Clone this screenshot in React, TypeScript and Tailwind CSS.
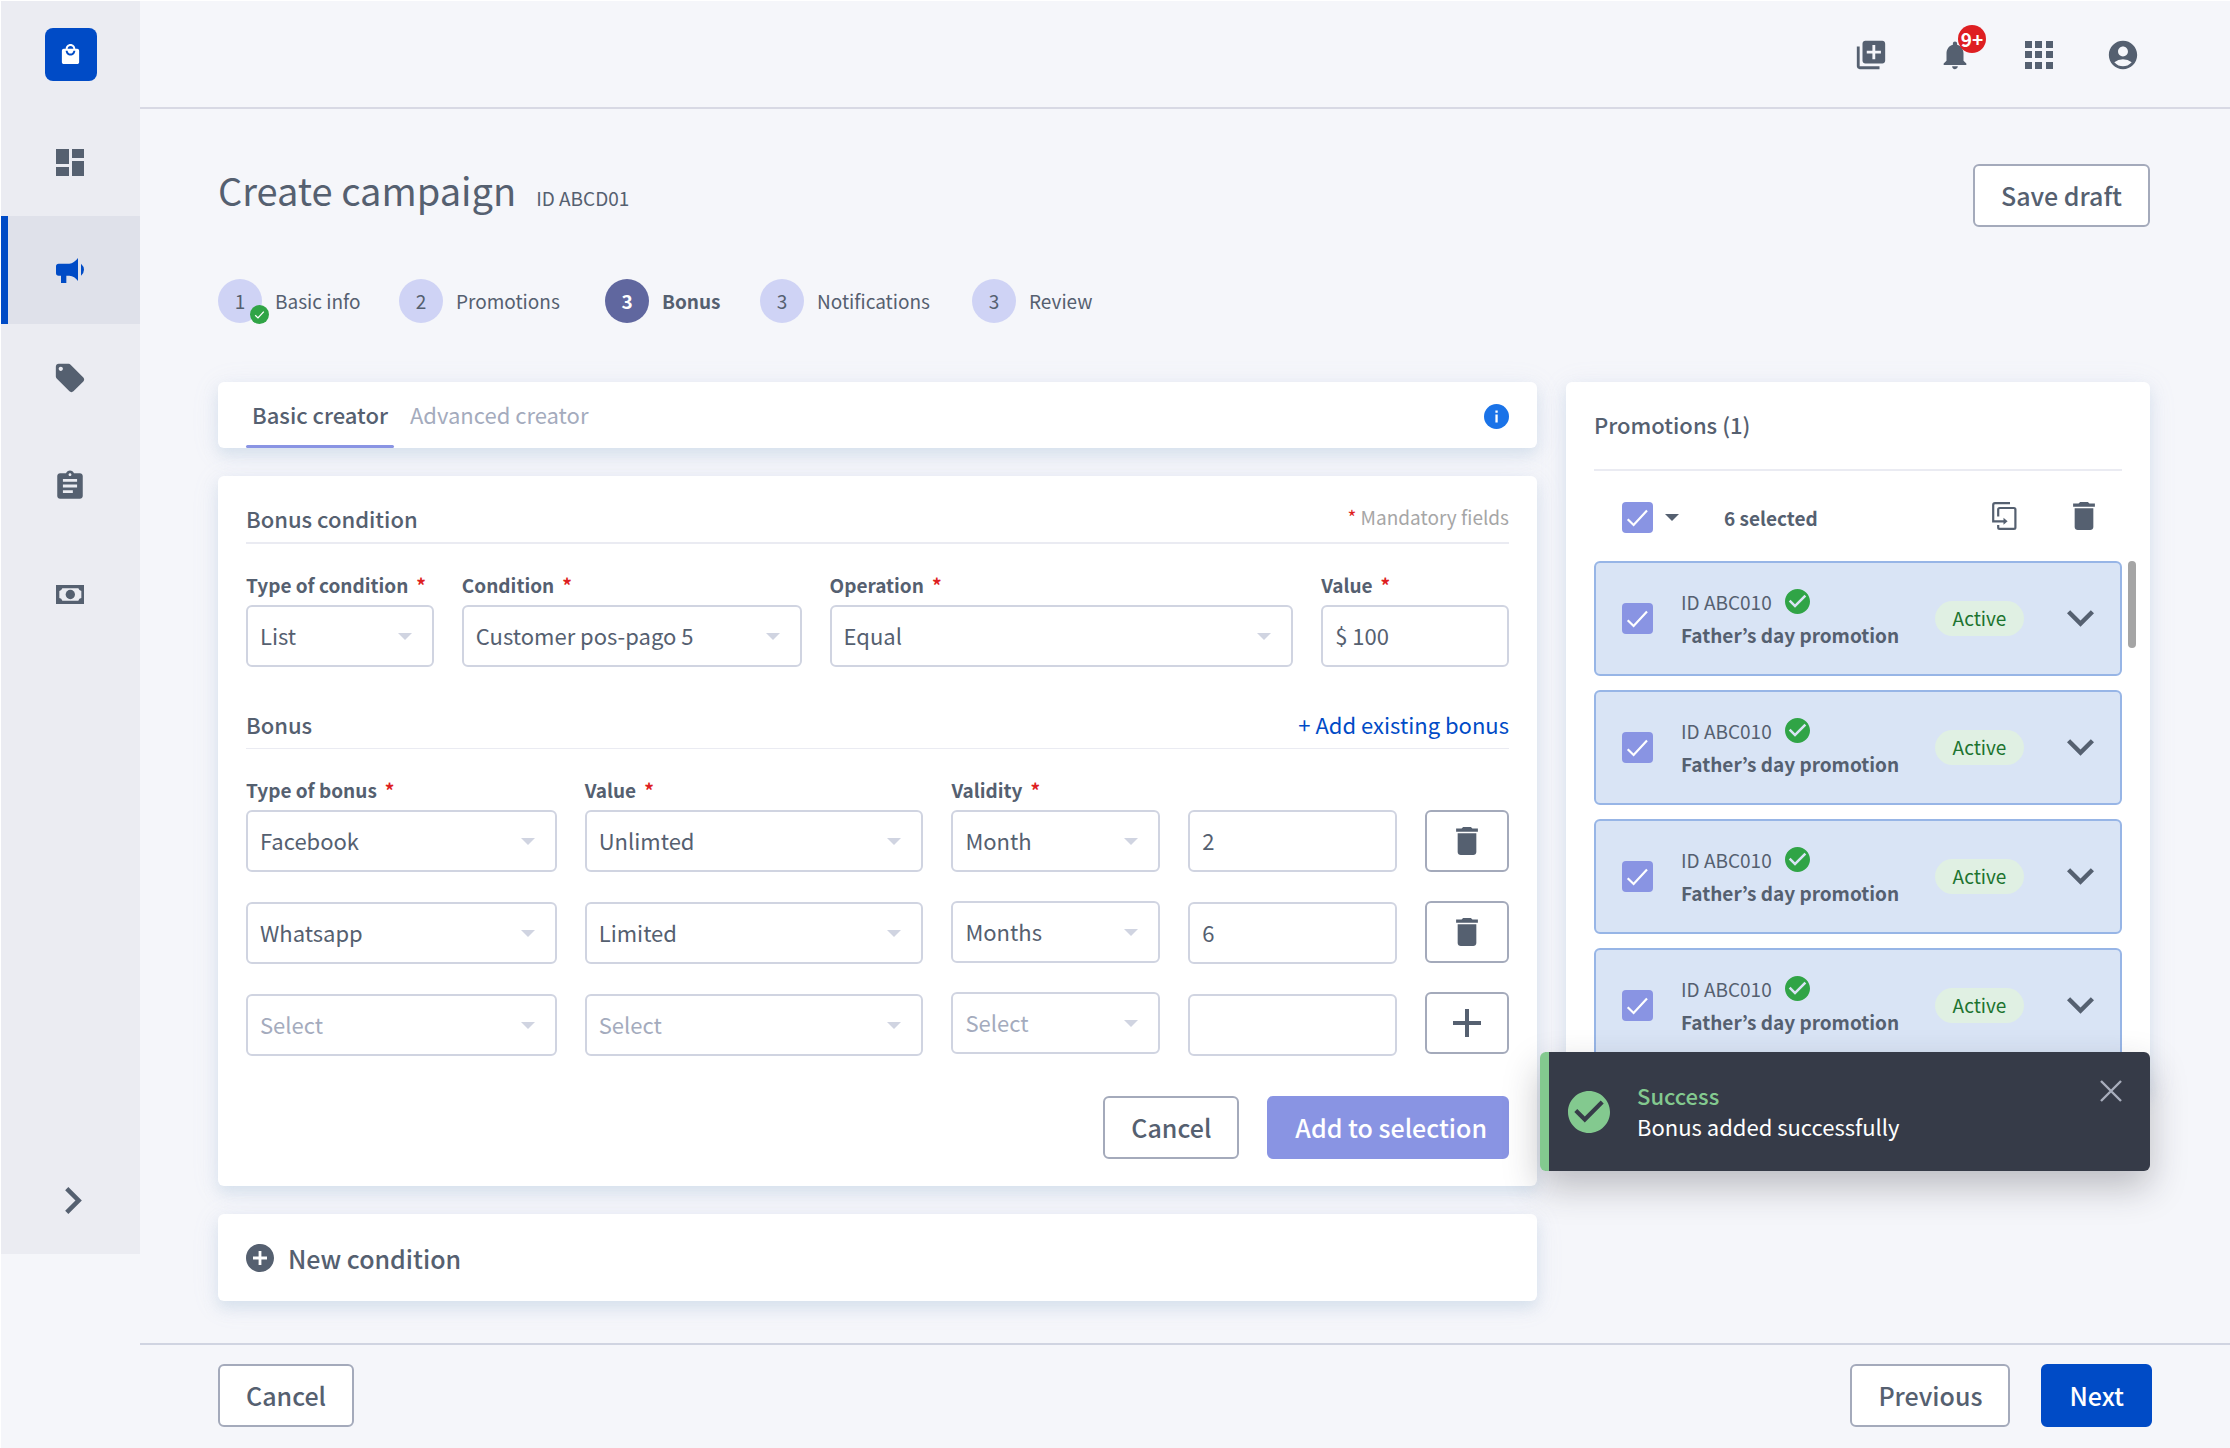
import type { ReactNode } from "react";
import { MdAccountCircle, MdAssignment, MdLibraryAdd, MdLocalMall, MdLocalOffer, MdNotifications } from "react-icons/md";

function Trash() {
  return (
    <svg viewBox="5 3 14 18" className="h-7 w-[22px]" fill="currentColor" aria-hidden="true">
      <path d="M6 19c0 1.1.9 2 2 2h8c1.1 0 2-.9 2-2V7H6v12zM19 4h-3.5l-1-1h-5l-1 1H5v2h14V4z" />
    </svg>
  );
}

function CheckCircle({ className }: { className: string }) {
  return (
    <svg viewBox="2 2 20 20" className={className} fill="currentColor" aria-hidden="true">
      <path d="M12 2C6.48 2 2 6.48 2 12s4.48 10 10 10 10-4.48 10-10S17.52 2 12 2zm-2 15l-5-5 1.41-1.41L10 14.17l7.59-7.59L19 8l-9 9z" />
    </svg>
  );
}

function Dashboard() {
  return (
    <svg viewBox="0 0 28 27" className="h-[27px] w-7" fill="currentColor" aria-hidden="true">
      <path d="M0 0h13v15H0zM16 0h12v9H16zM0 18h13v9H0zM16 12h12v15H16z" />
    </svg>
  );
}

function Megaphone() {
  return (
    <svg viewBox="168 414 84 75" className="h-[25px] w-7" fill="currentColor" aria-hidden="true">
      <path d="M176 431H208Q222 430 234 414V483Q224 468 208 467H199V489H183V467H176Q168 467 168 459V439Q168 431 176 431Z" />
      <path d="M243 431Q252 439 252 449T243 467Z" />
    </svg>
  );
}

function Money() {
  return (
    <svg viewBox="0 0 84 57" className="h-[19px] w-7" fill="currentColor" fillRule="evenodd" aria-hidden="true">
      <path d="M0 0H84V57H0ZM19 10Q17 17 10 18V39Q17 40 19 47H67Q69 40 76 39V18Q69 17 67 10Z" />
      <circle cx="43" cy="28.5" r="14" />
    </svg>
  );
}

function AppsGrid() {
  return (
    <svg viewBox="0 0 28 28" className="m-[3px] size-7" fill="currentColor" aria-hidden="true">
      <path d="M0 0h7v7H0zM10 0h7v7h-7zM21 0h7v7h-7zM0 10h7v7H0zM10 10h7v7h-7zM21 10h7v7h-7zM0 21h7v7H0zM10 21h7v7h-7zM21 21h7v7h-7z" />
    </svg>
  );
}

function MoveCopy() {
  return (
    <svg viewBox="0 0 25 28" className="h-7 w-[25px]" fill="none" stroke="currentColor" strokeWidth="2.2" aria-hidden="true">
      <path d="M18 1.2H3Q1.2 1.2 1.2 3V19.3H12.5" />
      <path d="M6.2 14.5V7.5Q6.2 6 7.7 6H21.9Q23.4 6 23.4 7.5V25.4Q23.4 26.8 21.9 26.8H7.7Q6.2 26.8 6.2 25.4V23" />
      <path d="M11.5 15.8L15.6 19.3L11.5 22.8Z" fill="currentColor" stroke="none" />
    </svg>
  );
}

function Caret({ className }: { className: string }) {
  return (
    <svg viewBox="0 0 14 7" className={className} fill="currentColor" aria-hidden="true">
      <path d="M0 0H14L7 7Z" />
    </svg>
  );
}

function CheckBox({ label }: { label: string }) {
  return (
    <span className="grid size-[31px] shrink-0">
      <input type="checkbox" defaultChecked aria-label={label} className="col-start-1 row-start-1 size-[31px] appearance-none rounded bg-[#8994e3]" />
      <svg viewBox="0 0 31 31" className="pointer-events-none col-start-1 row-start-1 size-[31px]" fill="none" stroke="white" strokeWidth="2.2" aria-hidden="true">
        <path d="M5.7 17.2L11.6 23L25 8.6" />
      </svg>
    </span>
  );
}

const fieldBox = "h-[62px] w-full rounded-md border-2 border-[#d0d4e1] bg-white pb-0.5 pl-3 text-[22px] leading-8";

function Select({ label, id, value, muted }: { label: string; id?: string; value: string; muted?: boolean }) {
  return (
    <div className="relative">
      <select id={id} aria-label={id ? undefined : label} className={`${fieldBox} appearance-none pr-10 ${muted ? "text-[#a4abbd]" : ""}`}>
        <option>{value}</option>
      </select>
      <Caret className="pointer-events-none absolute top-[28px] right-[22px] h-[7px] w-3.5 text-[#d0d4e1]" />
    </div>
  );
}

function TextField({ label, id, value }: { label: string; id?: string; value: string }) {
  return <input id={id} aria-label={id ? undefined : label} defaultValue={value} className={fieldBox} />;
}

function Label({ htmlFor, children }: { htmlFor: string; children: ReactNode }) {
  return (
    <label htmlFor={htmlFor} className="mb-1.5 flex h-7 gap-2 text-[19px] leading-7 font-bold">
      {children}
      <span className="text-[#de1f22]">*</span>
    </label>
  );
}

function Button({ children, look = "outline" }: { children: ReactNode; look?: "outline" | "soft" | "primary" }) {
  const looks = {
    outline: "border-[#a4aabb] bg-white px-[26px]",
    soft: "border-[#8994e3] bg-[#8994e3] pr-5 pl-[26px] text-white",
    primary: "border-[#004bc6] bg-[#004bc6] px-[26px] text-white",
  };
  return (
    <button type="button" className={`h-[63px] rounded-md border-2 pb-0.5 text-[25px] leading-9 font-medium ${looks[look]}`}>
      {children}
    </button>
  );
}

function IconButton({ label, children }: { label: string; children: ReactNode }) {
  return (
    <button type="button" aria-label={label} className="flex h-[62px] w-full items-center justify-center rounded-md border-2 border-[#a4aabb] bg-white">
      {children}
    </button>
  );
}

const card = "rounded-md bg-white shadow-[0_7px_14px_rgba(175,200,220,0.36),0_4px_28px_rgba(160,165,215,0.12)]";

const nav = [
  { label: "Dashboard", icon: <Dashboard /> },
  { label: "Campaigns", icon: <Megaphone />, active: true },
  { label: "Offers", icon: <MdLocalOffer size={34} /> },
  { label: "Reports", icon: <MdAssignment size={34} /> },
  { label: "Payments", icon: <Money /> },
];

function Sidebar() {
  return (
    <nav aria-label="Main" className="flex h-[1253px] w-[139px] shrink-0 flex-col bg-[#ebecf2]">
      <div className="flex h-[107px] items-center justify-center">
        <a href="#home" aria-label="Home" className="flex h-[53px] w-[52px] items-center justify-center rounded-lg bg-[#004bc6] text-white">
          <MdLocalMall size={23} />
        </a>
      </div>
      {nav.map((n) => (
        <a
          key={n.label}
          href={`#${n.label.toLowerCase()}`}
          aria-label={n.label}
          className={`flex h-[108px] items-center justify-center border-r-8 border-l-[7px] border-r-transparent ${n.active ? "border-l-[#004bc6] bg-[#dfe1ea] text-[#004bc6]" : "border-l-transparent"}`}
        >
          {n.icon}
        </a>
      ))}
      <button type="button" aria-label="Expand menu" className="mt-auto mb-9 flex h-9 items-center justify-center pl-1.5">
        <svg viewBox="8.59 6 7.41 12" className="h-[27px] w-[17px]" fill="currentColor" aria-hidden="true">
          <path d="M10 6L8.59 7.41 13.17 12l-4.58 4.59L10 18l6-6z" />
        </svg>
      </button>
    </nav>
  );
}

function Header() {
  return (
    <header className="flex h-[108px] items-center justify-end gap-[50px] border-b-2 border-[#d8d9e4] pt-0.5 pr-[90px]">
      <button type="button" aria-label="Add to library"><MdLibraryAdd size={34} /></button>
      <button type="button" aria-label="Notifications" className="relative">
        <MdNotifications size={34} />
        <span className="absolute -top-[13px] -right-[14px] flex size-7 items-center justify-center rounded-full bg-[#de1f22] text-[19px] leading-7 font-bold text-white">9+</span>
      </button>
      <button type="button" aria-label="Apps"><AppsGrid /></button>
      <button type="button" aria-label="Account"><MdAccountCircle size={34} /></button>
    </header>
  );
}

const steps = [
  { n: 1, label: "Basic info", done: true },
  { n: 2, label: "Promotions" },
  { n: 3, label: "Bonus", current: true },
  { n: 3, label: "Notifications" },
  { n: 3, label: "Review" },
];

function Steps() {
  return (
    <ol className="mt-[52px] grid grid-cols-[181px_206px_155px_212px_auto] text-[19px] leading-7">
      {steps.map((s) => (
        <li key={s.label} className={`flex items-center gap-[13px] ${s.current ? "font-bold" : ""}`}>
          <span className={`relative flex size-11 items-center justify-center rounded-full ${s.current ? "bg-[#60679f] text-white" : "bg-[#cfd3f5]"}`}>
            {s.n}
            {s.done && (
              <svg viewBox="0 0 19 19" className="absolute -right-[7px] -bottom-px size-[19px]" aria-hidden="true">
                <circle cx="9.5" cy="9.5" r="9.5" fill="#30a446" />
                <path d="M5.2 10.2L8 12.9L13.8 6.6" fill="none" stroke="white" strokeWidth="1.3" />
              </svg>
            )}
          </span>
          {s.label}
        </li>
      ))}
    </ol>
  );
}

function Tabs() {
  return (
    <div className={`flex h-[66px] justify-between px-7 ${card}`}>
      <div role="tablist" className="flex gap-2.5 text-[22px] leading-8">
        <button type="button" role="tab" aria-selected="true" className="relative px-1.5 pb-0.5 font-medium">
          Basic creator
          <span className="absolute inset-x-0 bottom-0 h-[3px] rounded-sm bg-[#8994e3]" />
        </button>
        <button type="button" role="tab" aria-selected="false" className="px-1.5 pb-0.5 text-[#a4abbd]">Advanced creator</button>
      </div>
      <button type="button" aria-label="Information" className="pt-0.5">
        <svg viewBox="0 0 25 25" className="size-[25px]" aria-hidden="true">
          <circle cx="12.5" cy="12.5" r="12.5" fill="#1a73e8" />
          <path d="M11.4 10.5h2.3v8h-2.3zM11.4 6.5h2.3v2.2h-2.3z" fill="white" />
        </svg>
      </button>
    </div>
  );
}

function BonusForm() {
  return (
    <form className={`mt-7 px-7 pt-7 pb-[27px] ${card}`}>
      <div className="flex items-start justify-between border-b-2 border-[#eaebf2] pb-2.5">
        <h2 className="text-[22px] leading-7 font-medium">Bonus condition</h2>
        <p className="text-[19px] leading-[26px] text-[#a6a6a6]"><span className="text-[#de1f22]">*</span> Mandatory fields</p>
      </div>
      <div className="mt-[27px] grid grid-cols-[188fr_340fr_464fr_188fr] gap-7">
        <div>
          <Label htmlFor="condition-type">Type of condition</Label>
          <Select id="condition-type" label="Type of condition" value="List" />
        </div>
        <div>
          <Label htmlFor="condition">Condition</Label>
          <Select id="condition" label="Condition" value="Customer pos-pago 5" />
        </div>
        <div>
          <Label htmlFor="operation">Operation</Label>
          <Select id="operation" label="Operation" value="Equal" />
        </div>
        <div>
          <Label htmlFor="condition-value">Value</Label>
          <TextField id="condition-value" label="Value" value="$ 100" />
        </div>
      </div>

      <div className="mt-[43px] flex items-start justify-between border-b border-[#eaebf2] pb-2.5">
        <h2 className="text-[22px] leading-7 font-medium">Bonus</h2>
        <a href="#existing" className="text-[22px] leading-7 text-[#004bc6]">+ Add existing bonus</a>
      </div>
      <div className="mt-[27px] grid grid-cols-[311fr_339fr_209fr_209fr_84fr] gap-x-7">
        <div>
          <Label htmlFor="bonus-type">Type of bonus</Label>
          <div className="flex flex-col gap-[30px]">
            <Select id="bonus-type" label="Type of bonus" value="Facebook" />
            <Select label="Type of bonus, row 2" value="Whatsapp" />
            <Select label="Type of bonus, row 3" value="Select" muted />
          </div>
        </div>
        <div>
          <Label htmlFor="bonus-value">Value</Label>
          <div className="flex flex-col gap-[30px]">
            <Select id="bonus-value" label="Value" value="Unlimted" />
            <Select label="Value, row 2" value="Limited" />
            <Select label="Value, row 3" value="Select" muted />
          </div>
        </div>
        <div>
          <Label htmlFor="validity">Validity</Label>
          <div className="flex flex-col gap-[29px]">
            <Select id="validity" label="Validity" value="Month" />
            <Select label="Validity, row 2" value="Months" />
            <Select label="Validity, row 3" value="Select" muted />
          </div>
        </div>
        <div className="flex flex-col gap-[30px] pt-[34px]">
          <TextField label="Amount, row 1" value="2" />
          <TextField label="Amount, row 2" value="6" />
          <TextField label="Amount, row 3" value="" />
        </div>
        <div className="flex flex-col gap-[29px] pt-[34px]">
          <IconButton label="Delete row 1"><Trash /></IconButton>
          <IconButton label="Delete row 2"><Trash /></IconButton>
          <IconButton label="Add row">
            <svg viewBox="0 0 28 28" className="size-7" fill="currentColor" aria-hidden="true">
              <path d="M12 0h4v12h12v4H16v12h-4V16H0v-4h12z" />
            </svg>
          </IconButton>
        </div>
      </div>
      <div className="mt-10 flex justify-end gap-7">
        <Button>Cancel</Button>
        <Button look="soft">Add to selection</Button>
      </div>
    </form>
  );
}

function PromotionItem({ id }: { id: string }) {
  return (
    <li className="flex h-[115px] items-center rounded-md border-2 border-[#97b5e6] bg-[#d9e4f5] px-[26px]">
      <CheckBox label={`Select ${id}`} />
      <div className="ml-7 pb-0.5 text-[19px] leading-[33px]">
        <p className="flex items-center gap-[13px]">
          ID ABC010
          <CheckCircle className="size-[25px] text-[#30a446]" />
        </p>
        <p className="font-bold">Father’s day promotion</p>
      </div>
      <span className="mr-[43px] ml-auto flex h-[35px] w-[89px] items-center justify-center rounded-full bg-[#e0f0e3] pb-0.5 text-[19px] leading-7 text-[#1d7430]">Active</span>
      <button type="button" aria-label="Expand promotion">
        <svg viewBox="6 8.59 12 7.41" className="h-[17px] w-[27px]" fill="currentColor" aria-hidden="true">
          <path d="M16.59 8.59L12 13.17 7.41 8.59 6 10l6 6 6-6z" />
        </svg>
      </button>
    </li>
  );
}

function Promotions() {
  return (
    <section className={`px-7 pt-[26px] pb-7 ${card}`}>
      <h2 className="border-b-2 border-[#eaebf2] pb-[29px] text-[22px] leading-8 font-medium">Promotions (1)</h2>
      <div className="mt-[31px] flex h-[31px] items-center pr-[27px] pl-7">
        <CheckBox label="Select all" />
        <button type="button" aria-label="Selection options" className="ml-3"><Caret className="h-[7px] w-3.5" /></button>
        <span className="ml-[45px] text-[19px] leading-7 font-bold">6 selected</span>
        <button type="button" aria-label="Move" className="mr-14 ml-auto pb-[3px]"><MoveCopy /></button>
        <button type="button" aria-label="Delete" className="pb-[3px]"><Trash /></button>
      </div>
      <div className="relative mt-7">
        <ul className="flex flex-col gap-3.5">
          <PromotionItem id="promotion 1" />
          <PromotionItem id="promotion 2" />
          <PromotionItem id="promotion 3" />
          <PromotionItem id="promotion 4" />
        </ul>
        <span className="absolute top-0 -right-3.5 h-[87px] w-2 rounded-full bg-[#a5a5a5]" />
      </div>
    </section>
  );
}

function Toast() {
  return (
    <div role="status" className="absolute top-[670px] right-0 -left-[26px] flex h-[119px] items-center rounded-md border-l-[9px] border-[#83c98f] bg-[#363b48] pl-[19px] shadow-[0_16px_36px_rgba(40,40,50,0.28)]">
      <CheckCircle className="size-[42px] text-[#83c98f]" />
      <div className="ml-[27px] pb-0.5 text-[22px] leading-[31px]">
        <p className="font-medium text-[#83c98f]">Success</p>
        <p className="text-white">Bonus added successfully</p>
      </div>
      <button type="button" aria-label="Close" className="mt-7 mr-7 mb-auto ml-auto text-[#a8aebd]">
        <svg viewBox="0 0 22 22" className="size-[22px]" fill="none" stroke="currentColor" strokeWidth="2.4" aria-hidden="true">
          <path d="M1 1L21 21M21 1L1 21" />
        </svg>
      </button>
    </div>
  );
}

export default function App() {
  return (
    <div className="flex min-h-screen items-start border-t border-l border-white bg-[#f5f6fa] font-['Noto_Sans_CJK_KR',sans-serif] text-[#556070]">
      <Sidebar />
      <div className="min-w-0 flex-1">
        <Header />
        <main className="pt-[55px] pr-20 pb-[42px] pl-[78px]">
          <div className="flex items-start justify-between">
            <div className="flex items-baseline gap-5">
              <h1 className="text-[38px] leading-[52px]">Create campaign</h1>
              <span className="text-[19px] leading-7">ID ABCD01</span>
            </div>
            <Button>Save draft</Button>
          </div>
          <Steps />
          <div className="mt-[59px] grid grid-cols-[minmax(0,1fr)_584px] items-start gap-[29px]">
            <div>
              <Tabs />
              <BonusForm />
              <div className={`mt-7 flex h-[87px] items-center px-7 ${card}`}>
                <button type="button" className="flex items-center gap-3.5 text-[25px] leading-9 font-medium">
                  <svg viewBox="2 2 20 20" className="size-7" fill="currentColor" aria-hidden="true">
                    <path d="M12 2C6.48 2 2 6.48 2 12s4.48 10 10 10 10-4.48 10-10S17.52 2 12 2zm5 11h-4v4h-2v-4H7v-2h4V7h2v4h4v2z" />
                  </svg>
                  New condition
                </button>
              </div>
            </div>
            <div className="relative">
              <Promotions />
              <Toast />
            </div>
          </div>
        </main>
        <footer className="flex justify-between border-t-2 border-[#d0d4e1] pt-[19px] pr-[78px] pb-[21px] pl-[78px]">
          <Button>Cancel</Button>
          <div className="flex gap-[31px]">
            <Button>Previous</Button>
            <Button look="primary">Next</Button>
          </div>
        </footer>
      </div>
    </div>
  );
}
